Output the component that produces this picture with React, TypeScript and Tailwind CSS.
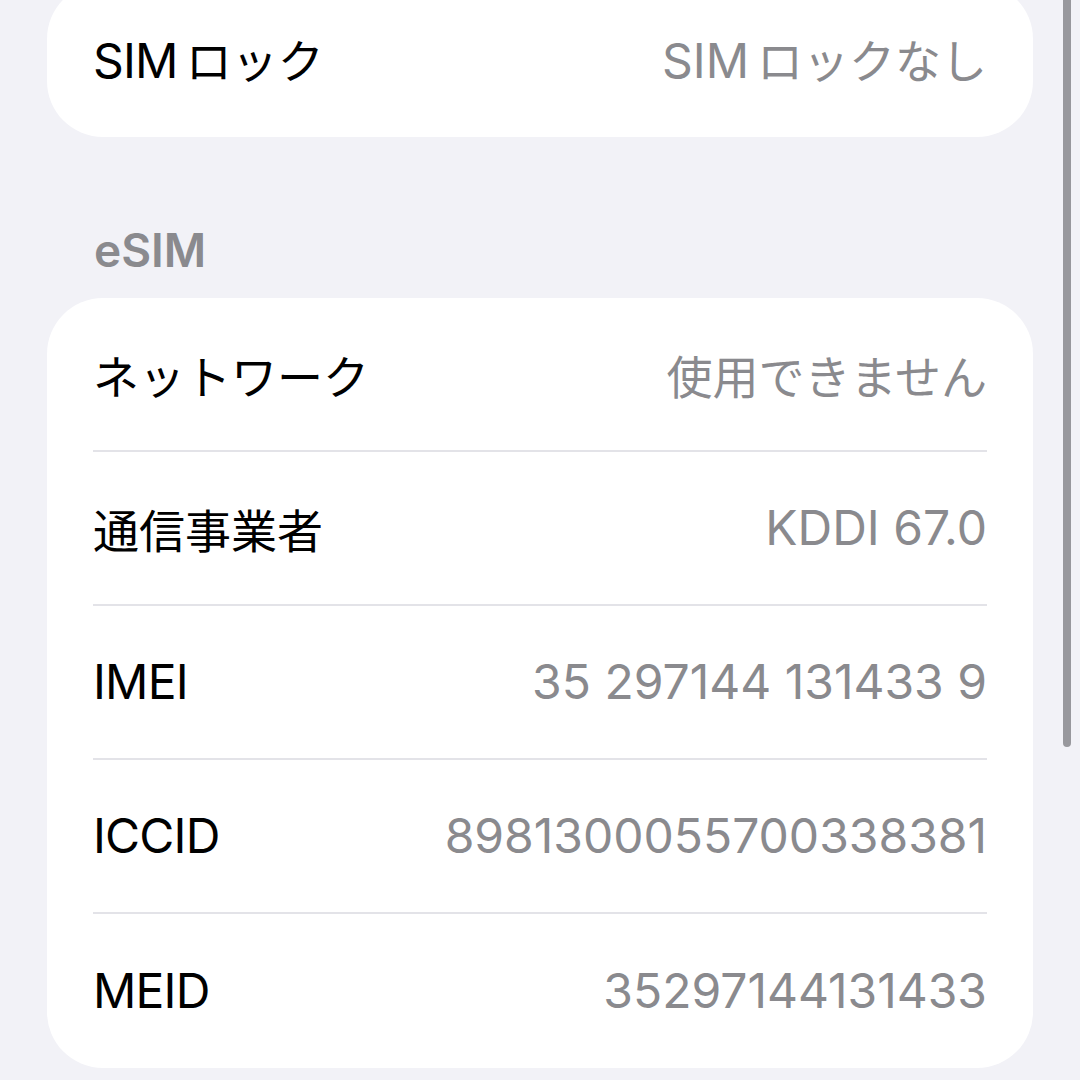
import React from "react";

const latin = "font-['Inter','Noto_Sans_CJK_JP',sans-serif] text-[48px]";
const cjk = "font-['Noto_Sans_CJK_JP',sans-serif] text-[46px] tracking-normal";

function Mixed({ text, track }: { text: string; track: string }) {
    const parts = text.split(/([\u3040-\u30ff\u3400-\u9fff\uff00-\uffef]+)/).filter(Boolean);
    return (
        <>
            {parts.map((p, i) =>
                /[\u3040-\u30ff\u3400-\u9fff]/.test(p) ? (
                    <span key={i} className={cjk + (i > 0 ? " ml-[8px]" : "")}>{p}</span>
                ) : (
                    <span key={i} className={latin + " " + track}>{p}</span>
                )
            )}
        </>
    );
}

function Row({ label, value, last }: { label: string; value: string; last?: boolean }) {
    return (
        <div className="px-[46px]">
            <div className={"flex h-[154px] items-center justify-between " + (last ? "" : "border-b-2 border-[#e3e3e8]")}>
                <div className="leading-none text-black whitespace-nowrap"><Mixed text={label} track="tracking-[-0.8px]"/></div>
                <div className="leading-none text-[#8a8a8e] whitespace-nowrap"><Mixed text={value} track="tracking-[0px]"/></div>
            </div>
        </div>
    );
}

const esim = [
    { label: "ネットワーク", value: "使用できません" },
    { label: "通信事業者", value: "KDDI 67.0" },
    { label: "IMEI", value: "35 297144 131433 9" },
    { label: "ICCID", value: "8981300055700338381" },
    { label: "MEID", value: "35297144131433" },
];

export default function App() {
    return (
        <div className="relative h-[1080px] w-[1080px] overflow-hidden bg-[#f2f2f7]">
            <div className="pl-[47px] w-[1033px]">
                <div className="-mt-[17px] rounded-[56px] bg-white">
                    <Row label="SIMロック" value="SIMロックなし" last/>
                </div>
                <div className="pl-[47px] pt-[90px] pb-[25px] leading-none">
                    <span className="font-['Inter',sans-serif] text-[46px] font-semibold text-[#8a8a8e]">eSIM</span>
                </div>
                <div className="rounded-[56px] bg-white">
                    {esim.map((r, i) => (
                        <Row key={r.label} label={r.label} value={r.value} last={i === esim.length - 1}/>
                    ))}
                </div>
            </div>
            <div className="absolute right-[9px] top-[-20px] h-[767px] w-[8px] rounded-full bg-[#98989d]"/>
        </div>
    );
}
